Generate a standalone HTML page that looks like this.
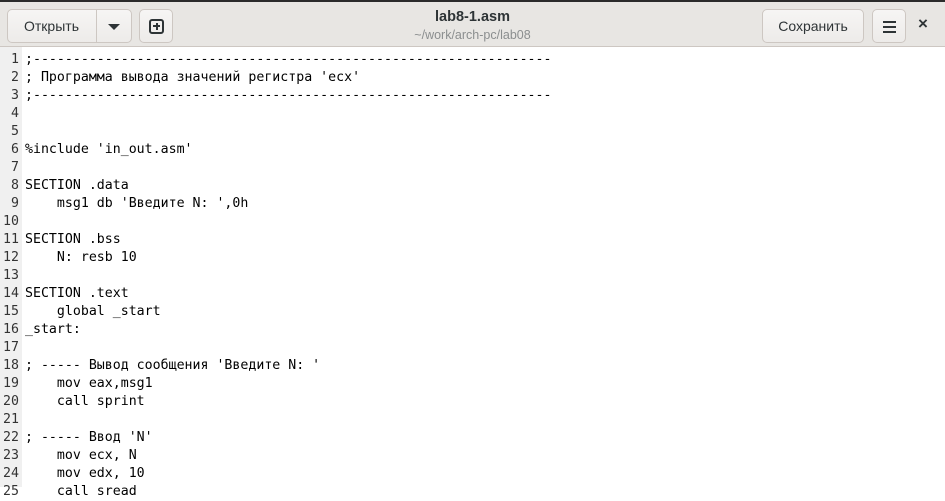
<!DOCTYPE html>
<html><head><meta charset="utf-8"><style>
*{margin:0;padding:0;box-sizing:border-box}
body{width:945px;height:487px;overflow:hidden;background:#fff;font-family:"Liberation Sans","DejaVu Sans",sans-serif;position:relative}
.hdr{position:absolute;left:0;top:0;width:945px;height:47px;background:#e8e6e3;border-top:2px solid #2b2b2b;border-bottom:1px solid #cdc7c2}
.btn{position:absolute;top:7px;height:34px;background:linear-gradient(#f6f5f4,#edebe9);border:1px solid #cdc7c2;border-radius:5px;color:#2e3436;font-size:14px;line-height:32px;text-align:center}
.title{position:absolute;left:0;width:945px;text-align:center}
.gut{position:absolute;left:0;top:47px;width:22px;height:440px;background:#f0f0f0}
pre{position:absolute;top:51px;font-family:"DejaVu Sans Mono","Liberation Mono",monospace;font-size:13.25px;line-height:18px;color:#000}
.nums{left:0;width:19px;text-align:right;color:#333}
.code{left:25px}
</style></head><body>
<div class="hdr">
 <div class="btn" style="left:7px;width:125px;border-radius:5px;text-align:left;padding-left:16px">Открыть</div>
 <div style="position:absolute;left:96px;top:8px;width:1px;height:32px;background:#cdc7c2"></div>
 <div style="position:absolute;left:108px;top:22px;width:0;height:0;border-left:6px solid transparent;border-right:6px solid transparent;border-top:6px solid #2e3436"></div>
 <div class="btn" style="left:139px;width:34px"><span style="position:absolute;left:9px;top:9px;width:15px;height:15px;border:2px solid #2e3436;border-radius:3px"></span><span style="position:absolute;left:13px;top:15px;width:7px;height:2px;background:#2e3436"></span><span style="position:absolute;left:15.5px;top:12.5px;width:2px;height:7px;background:#2e3436"></span></div>
 <div class="title" style="top:7px;font-weight:bold;font-size:14.5px;color:#2e3436">lab8-1.asm</div>
 <div class="title" style="top:26px;font-size:12.5px;color:#8b8e8f">~/work/arch-pc/lab08</div>
 <div class="btn" style="left:762px;width:102px">Сохранить</div>
 <div class="btn" style="left:872px;width:34px"><span style="position:absolute;left:10px;top:11px;width:13px;height:2px;background:#2e3436;box-shadow:0 5px 0 #2e3436,0 10px 0 #2e3436"></span></div>
 <div style="position:absolute;left:918px;top:12px;font-size:17px;font-weight:bold;color:#2e3436">×</div>
</div>
<div class="gut"></div>
<pre class="nums">1
2
3
4
5
6
7
8
9
10
11
12
13
14
15
16
17
18
19
20
21
22
23
24
25</pre>
<pre class="code">;-----------------------------------------------------------------
; Программа вывода значений регистра 'ecx'
;-----------------------------------------------------------------


%include 'in_out.asm'

SECTION .data
    msg1 db 'Введите N: ',0h

SECTION .bss
    N: resb 10

SECTION .text
    global _start
_start:

; ----- Вывод сообщения 'Введите N: '
    mov eax,msg1
    call sprint

; ----- Ввод 'N'
    mov ecx, N
    mov edx, 10
    call sread</pre>
</body></html>
